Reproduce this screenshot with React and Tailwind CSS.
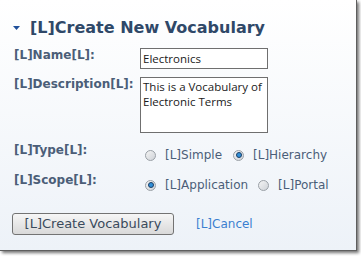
import React from 'react';

const Radio = ({ checked }) => (
  <span className="relative inline-flex h-[11px] w-[11px] shrink-0 items-center justify-center rounded-full border border-[#9aa0a6] bg-linear-to-br from-[#f4f4f4] to-[#cfd3d8]">
    {checked && (
      <span className="h-[6px] w-[6px] rounded-full border border-[#1c3f66] bg-[#2f8fd8]" />
    )}
  </span>
);

const RadioOption = ({ label, checked }) => (
  <label className="flex items-center gap-[9px]">
    <Radio checked={checked} />
    <span>{label}</span>
  </label>
);

const Label = ({ children }) => (
  <div className="w-[140px] shrink-0 pl-[14px] text-[12px] font-bold leading-[14px] whitespace-nowrap text-[#4b5e78]">
    {children}
  </div>
);

export default function App() {
  return (
    <div className="h-[256px] w-[361px] bg-white font-['DejaVu_Sans',sans-serif]">
      <div className="flex h-[251px] w-[357px] flex-col border-r border-b border-[#5e5e5e] bg-linear-to-b from-white to-[#edf2f8] shadow-[2px_2px_3px_rgba(0,0,0,0.55)]">
        {/* Title */}
        <div className="mt-[18px] flex h-[20px] items-center pl-[13px]">
          <svg width="7" height="4" viewBox="0 0 7 4" className="mr-[10px]">
            <path d="M0 0 H7 L3.5 4 Z" fill="#1f4f9a" />
          </svg>
          <span className="text-[16px] font-bold text-[#2f4868]">[L]Create New Vocabulary</span>
        </div>

        {/* Name */}
        <div className="mt-[10px] flex items-start">
          <Label>[L]Name[L]:</Label>
          <input
            readOnly
            value="Electronics"
            className="h-[21px] w-[128px] border border-[#6f6f6f] bg-white px-[2px] font-['Open_Sans',sans-serif] text-[11.5px] text-[#1a1a1a] outline-none"
          />
        </div>

        {/* Description */}
        <div className="mt-[8px] flex items-start">
          <Label>[L]Description[L]:</Label>
          <textarea
            readOnly
            value="This is a Vocabulary of Electronic Terms"
            className="h-[56px] w-[128px] resize-none overflow-hidden border border-[#6f6f6f] bg-white px-[2px] py-[1px] font-['Open_Sans',sans-serif] text-[11.5px] leading-[15px] text-[#1a1a1a] outline-none"
          />
        </div>

        {/* Type */}
        <div className="mt-[10px] flex items-start">
          <Label>[L]Type[L]:</Label>
          <div className="mt-[5px] flex items-center gap-[11px] pl-[5px] text-[12px] leading-[14px] text-[#4b5e78]">
            <RadioOption label="[L]Simple" />
            <RadioOption label="[L]Hierarchy" checked />
          </div>
        </div>

        {/* Scope */}
        <div className="mt-[11px] flex items-start">
          <Label>[L]Scope[L]:</Label>
          <div className="mt-[5px] flex items-center gap-[10px] pl-[5px] text-[12px] leading-[14px] text-[#4b5e78]">
            <RadioOption label="[L]Application" checked />
            <RadioOption label="[L]Portal" />
          </div>
        </div>

        {/* Actions */}
        <div className="mt-[21px] flex items-center pl-[12px]">
          <button className="h-[22px] w-[162px] rounded-[3px] border border-[#737373] bg-linear-to-b from-[#f6f6f6] to-[#d9d9d9] text-[13px] leading-[20px] text-[#3a4a5c]">
            [L]Create Vocabulary
          </button>
          <a className="ml-[22px] text-[12px] text-[#3b7fd0]">[L]Cancel</a>
        </div>
      </div>
    </div>
  );
}
